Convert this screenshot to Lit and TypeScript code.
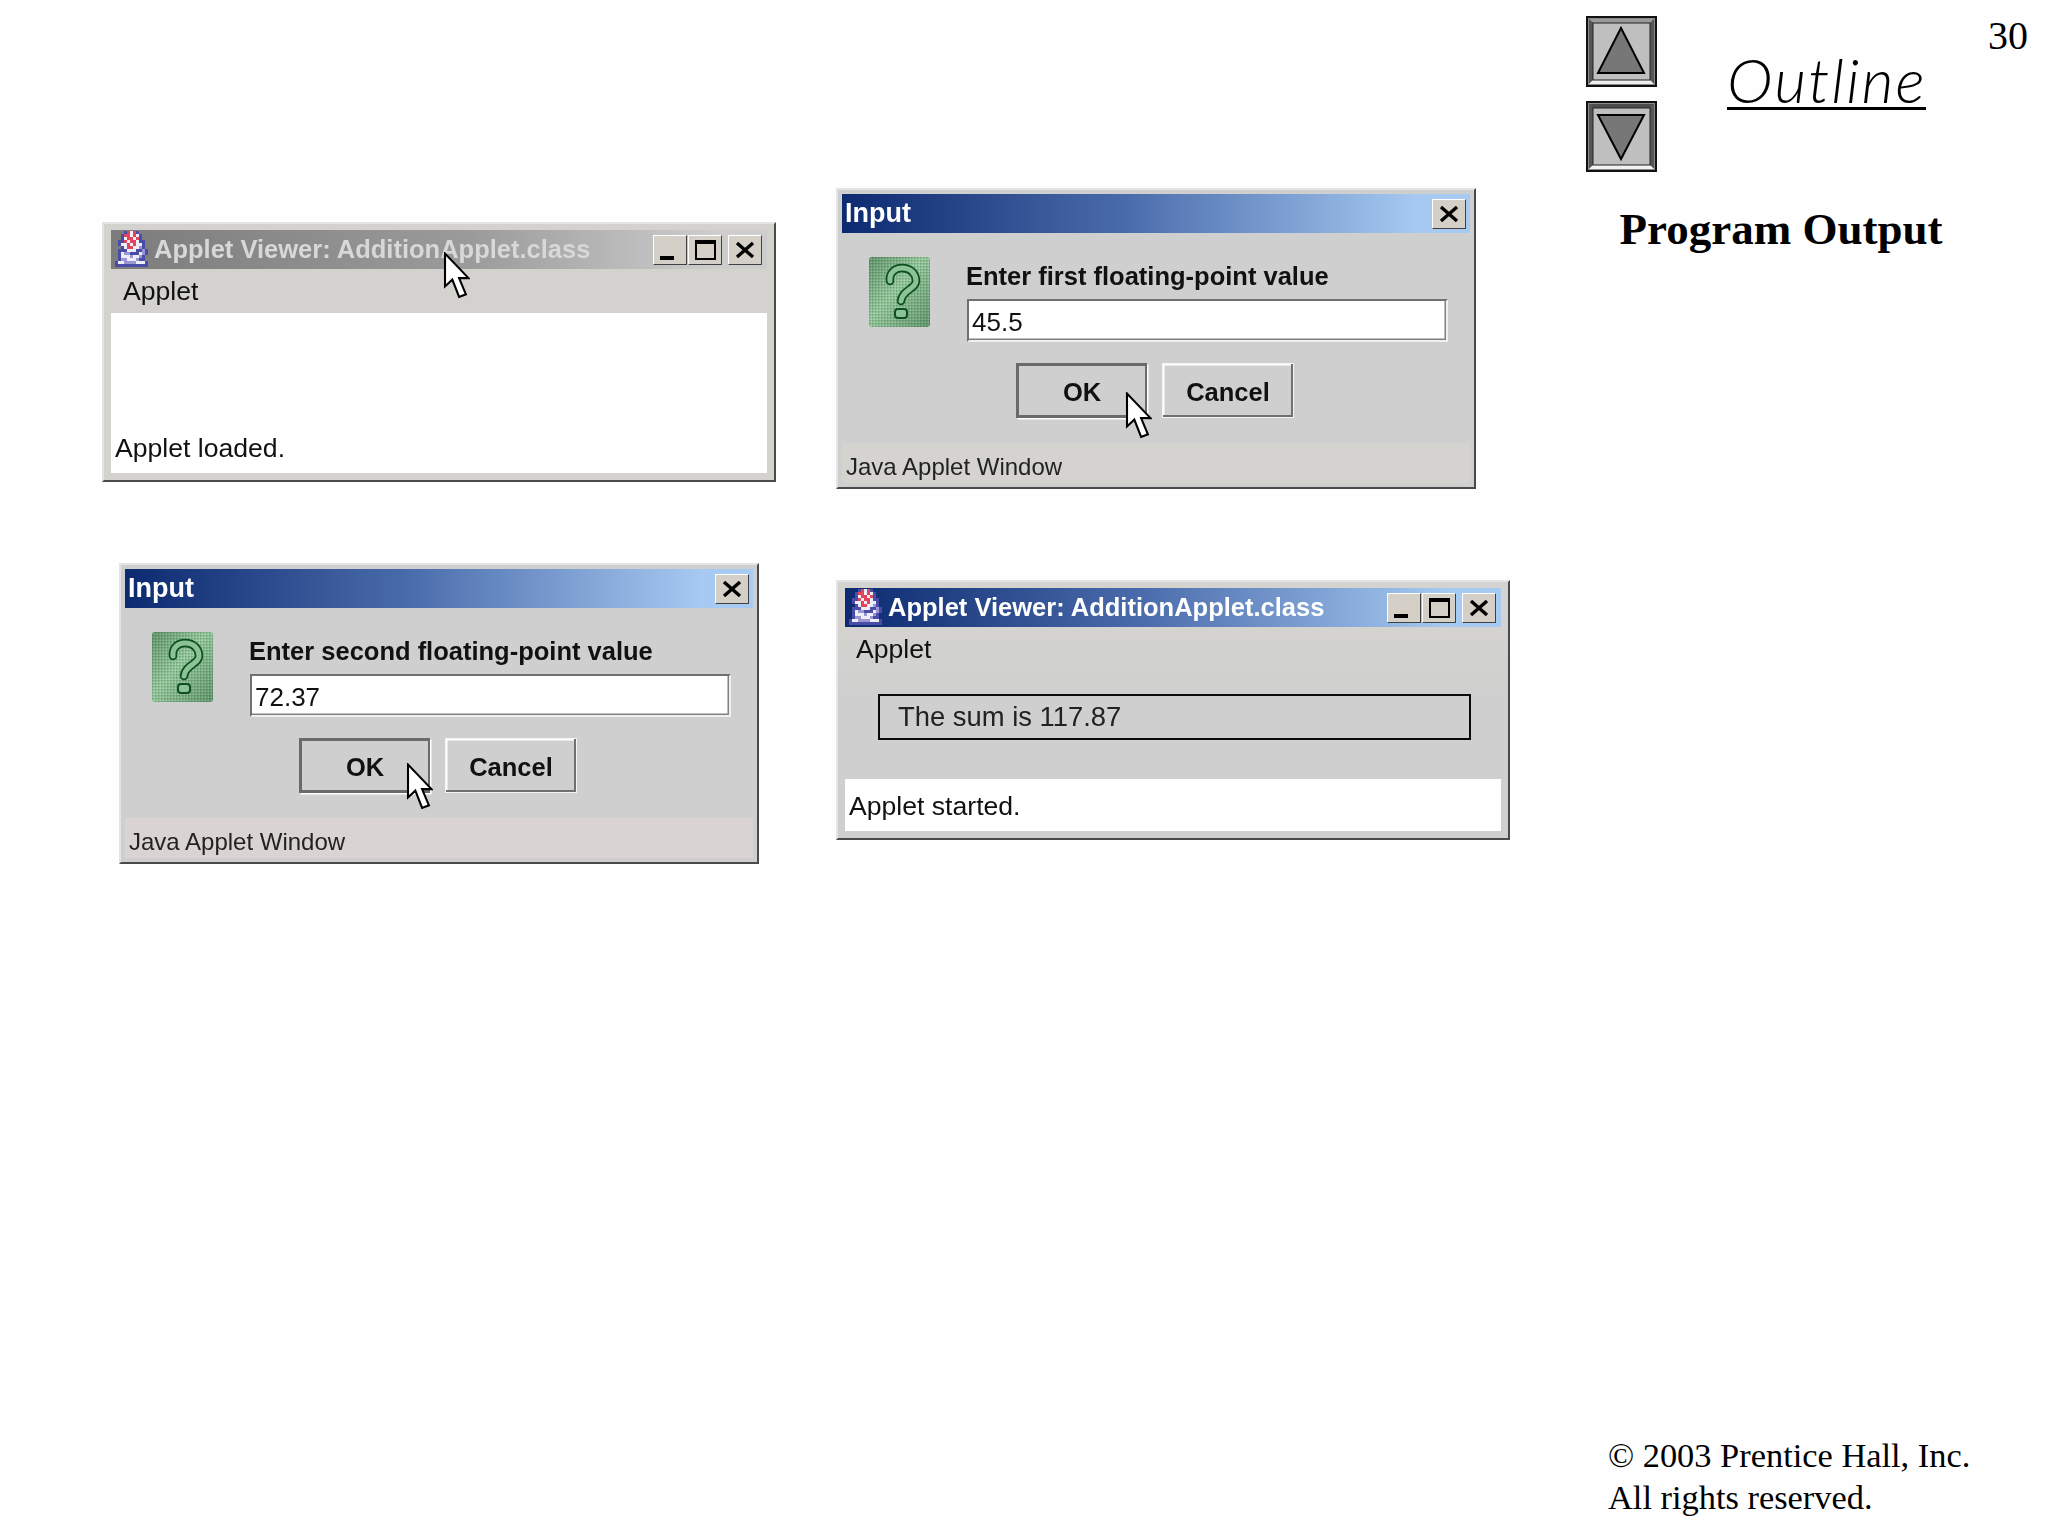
import { LitElement, html, css, svg } from "lit";
import { customElement } from "lit/decorators.js";

const ART = [
  "...brwrb...",
  "..brrwrwb..",
  "..bwrrwrb..",
  ".bbrwrrwbb.",
  ".bwwrwrwwb.",
  "..bwrrwwpb.",
  ".bbbwwwbbpb",
  ".bwppbbbwpb",
  ".bwwwpwwpb.",
  ".bppwwwpbb.",
  "bwwppppwwwb",
  "bbbbbbbbbbb",
];
const ART_COL: Record<string, string> = { b: "#4a4da8", w: "#eeeef8", r: "#e2445a", p: "#9a96d4" };

const coffee = () => html`<svg class="appicon" viewBox="0 0 33 36" width="33" height="36">
  ${ART.flatMap((row, y) =>
    [...row].map((c, x) => (c === "." ? null : svg`<rect x=${x * 3} y=${y * 3} width="3" height="3" fill=${ART_COL[c]}></rect>`))
  )}
</svg>`;

const question = (id: string) => html`<svg class="qicon" viewBox="0 0 61 70" width="61" height="70">
  <defs>
    <linearGradient id="g${id}" x1="0" y1="0" x2="1" y2="1">
      <stop offset="0" stop-color="#5a8e63"></stop>
      <stop offset=".45" stop-color="#93c79a"></stop>
      <stop offset="1" stop-color="#5a8e63"></stop>
    </linearGradient>
    <pattern id="d${id}" width="3" height="3" patternUnits="userSpaceOnUse">
      <rect width="1.5" height="1.5" fill="#3f7049" opacity=".4"></rect>
      <rect x="1.5" y="1.5" width="1.5" height="1.5" fill="#dff0e0" opacity=".3"></rect>
    </pattern>
  </defs>
  <rect width="61" height="70" rx="3" fill="url(#g${id})"></rect>
  <rect width="61" height="70" rx="3" fill="url(#d${id})"></rect>
  <path d="M21 24C20 15 27 11 33 11C42 11 47 17 47 24C47 32 33 33 32 44" fill="none" stroke="#0d4f22" stroke-width="8.5" stroke-linecap="round"></path>
  <path d="M21 24C20 15 27 11 33 11C42 11 47 17 47 24C47 32 33 33 32 44" fill="none" stroke="#8cc294" stroke-width="5" stroke-linecap="round"></path>
  <rect x="26" y="52" width="12" height="9" rx="3" fill="#8cc294" stroke="#0d4f22" stroke-width="2"></rect>
</svg>`;

const cursor = (cls: string) => html`<svg class="cursor ${cls}" viewBox="0 0 25 45" width="27" height="47">
  <path d="M1.5 1.5V33L8.5 26.5L15 43L21.5 40.5L15 25H24Z" fill="#fff" stroke="#000" stroke-width="2" stroke-linejoin="miter"></path>
</svg>`;

const capMin = () => html`<div class="cap"><span class="gmin"></span></div>`;
const capMax = () => html`<div class="cap"><span class="gmax"></span></div>`;
const capClose = () => html`<div class="cap"><svg viewBox="0 0 20 18" width="20" height="18"><path d="M2 2L18 16M18 2L2 16" stroke="#000" stroke-width="3.4"></path></svg></div>`;

const nav = (down: boolean) => html`<svg viewBox="0 0 71 71" width="71" height="71">
  <rect x="1" y="1" width="69" height="69" fill="#8a8a8a" stroke="#111" stroke-width="2"></rect>
  <path d="M3 3H68L63 8H8Z" fill=${down ? "#4d4d4d" : "#9a9a9a"}></path>
  <path d="M3 3V68L8 63V8Z" fill="#555"></path>
  <path d="M68 3V68L63 63V8Z" fill="#555"></path>
  <path d="M3 68H68L63 63H8Z" fill=${down ? "#f2f2f2" : "#efefef"}></path>
  <rect x="7" y="7" width="57" height="57" fill="#bfbfbf" stroke="#222" stroke-width="1"></rect>
  <path d=${down ? "M12 14H58L35 58Z" : "M35 12L58 57H12Z"} fill="#777" stroke="#000" stroke-width="2"></path>
</svg>`;

@customElement("app-root")
export class AppRoot extends LitElement {
  static styles = css`
    :host { display: block; }
    .page {
      display: flex; width: 2048px; height: 1536px; background: #fefefe; overflow: hidden;
      color: #000; font-family: "Liberation Serif", "Times New Roman", serif;
    }
    .desk { position: relative; flex: none; width: 1560px; height: 1536px; }
    .win {
      position: absolute; box-sizing: border-box; display: flex; flex-direction: column;
      padding: 6px 7px 7px 7px; background: #d4d2ce;
      border-style: solid; border-width: 2px; border-color: #e4e4e4 #4a4a4a #4a4a4a #e4e4e4;
      font-family: "Liberation Sans", Arial, sans-serif; color: #111; filter: blur(.45px);
    }
    .w1 { left: 102px; top: 222px; width: 674px; height: 260px; }
    .w2 { left: 836px; top: 188px; width: 640px; height: 301px; padding: 4px; background: #cfcfcf; }
    .w3 { left: 119px; top: 563px; width: 640px; height: 301px; padding: 4px; background: #cfcfcf; }
    .w4 { left: 836px; top: 580px; width: 674px; height: 260px; background: linear-gradient(#d4d3cf, #d4d3cf 15%, #cfcfcf 45%); }
    .title {
      flex: none; height: 39px; display: flex; align-items: center; gap: 6px; padding: 0 5px 0 4px;
      background: linear-gradient(90deg, #0c2a70, #4a6bab 45%, #a6caf2 92%); color: #fff;
      font-weight: 700; font-size: 25.5px;
    }
    .w1 .title { background: linear-gradient(90deg, #7c7c7c, #9b9b9b 55%, #cdcdcd 92%); color: #d8d8d8; }
    .w2 .title, .w3 .title { font-size: 27px; padding: 0 4px 0 3px; }
    .ttext { flex: 1; white-space: nowrap; }
    .caps { display: flex; align-items: center; }
    .cap {
      box-sizing: border-box; width: 34px; height: 30px; display: flex; align-items: center; justify-content: center;
      background: #d4d0c8; border-style: solid; border-width: 1.5px; border-color: #fff #404040 #404040 #fff;
    }
    .cap + .cap { margin-left: 1px; }
    .cap:last-child { margin-left: 6px; }
    .caps .cap:first-child { margin-left: 0; }
    .gmin { width: 14px; height: 4px; background: #000; align-self: flex-end; margin: 0 6px 4px 0; }
    .gmax { width: 21px; height: 20px; box-sizing: border-box; border: 2px solid #000; border-top-width: 4px; }
    .menu { flex: none; height: 44px; display: flex; align-items: center; padding-left: 12px; font-size: 26.6px; }
    .w4 .menu { height: 45px; padding-left: 11px; }
    .white { flex: 1; background: #fff; display: flex; align-items: flex-end; padding: 0 0 6px 4px; font-size: 26.6px; line-height: 38px; }
    .w4 .main { flex: 1; padding: 22px 30px 0 33px; }
    .outbox {
      box-sizing: border-box; height: 46px; border: 2.5px solid #0a0a0a; display: flex; align-items: center;
      padding-left: 18px; font-size: 27.4px; color: #222;
    }
    .w4 .white { flex: none; height: 50px; padding: 2px 0 0 4px; align-items: center; }
    .body { flex: 1; padding: 24px 0 0 27px; display: flex; flex-direction: column; }
    .row { display: flex; gap: 36px; }
    .qicon { flex: none; display: block; }
    .col { display: flex; flex-direction: column; }
    .label { font-weight: 700; font-size: 25.5px; line-height: 30px; height: 38px; margin-top: 4px; white-space: nowrap; }
    .field {
      box-sizing: border-box; width: 481px; height: 43px; margin-left: 1px; background: #fff;
      border-style: solid; border-width: 2px; border-color: #707070 #f0f0f0 #f0f0f0 #707070;
      box-shadow: inset -1.5px -1.5px 0 #808080; display: flex; align-items: center;
      padding: 4px 0 0 3px; font-size: 26px;
    }
    .btns { display: flex; gap: 15px; margin: 21px 0 0 147px; }
    .btn {
      box-sizing: border-box; height: 55px; padding-top: 3px; display: flex; align-items: center; justify-content: center;
      font-weight: 700; font-size: 25.5px; border: 1.5px solid #f4f4f4; box-shadow: inset -2px -2px 0 #707070, inset 1.5px 1.5px 0 #fff;
    }
    .ok { width: 131px; border: 3.5px solid #6a6a6a; border-right-width: 2px; box-shadow: 1.5px 1.5px 0 #fff; }
    .cancel { width: 132px; }
    .status {
      margin-top: auto; height: 40px; flex: none; display: flex; align-items: center; padding: 8px 0 0 4px; box-sizing: border-box;
      background: #d4d3d0; font-size: 24px; color: #222;
    }
    .w3 .status { background: #d9d3d1; }
    .cursor { position: absolute; z-index: 2; filter: blur(.4px); }
    .c1 { left: 443px; top: 252px; }
    .c2 { left: 1125px; top: 392px; }
    .c3 { left: 406px; top: 763px; }
    .appicon { flex: none; display: block; margin-top: -1px; }

    .side { flex: none; width: 488px; height: 1536px; display: flex; flex-direction: column; }
    .head { flex: none; display: flex; height: 188px; padding: 16px 0 0 26px; box-sizing: border-box; }
    .nav { display: flex; flex-direction: column; gap: 14px; flex: none; }
    .nav svg { display: block; }
    .outline-wrap { flex: none; margin: 27px 0 0 70px; height: 68px; }
    .outline {
      display: inline-block; font-family: Lato, "Open Sans", sans-serif; font-style: italic; font-weight: 300;
      font-size: 62px; letter-spacing: 2px; line-height: 72px; height: 64px; border-bottom: 3px solid #000;
      white-space: nowrap; width: 199px; text-align: center;
    }
    .num { font-size: 40px; line-height: 46px; margin: -3px 0 0 auto; padding-right: 20px; }
    .sub { flex: none; text-align: center; font-weight: 700; font-size: 45px; line-height: 52px; width: 442px; margin-top: 15px; }
    .copy { margin-top: auto; padding: 0 0 18px 48px; font-size: 34.4px; line-height: 42px; }
  `;

  private dialog(cls: string, id: string, label: string, value: string) {
    return html`<div class="win ${cls}">
      <div class="title">
        <span class="ttext">Input</span>
        <div class="caps">${capClose()}</div>
      </div>
      <div class="body">
        <div class="row">
          ${question(id)}
          <div class="col">
            <div class="label">${label}</div>
            <div class="field">${value}</div>
          </div>
        </div>
        <div class="btns">
          <div class="btn ok">OK</div>
          <div class="btn cancel">Cancel</div>
        </div>
      </div>
      <div class="status">Java Applet Window</div>
    </div>`;
  }

  private viewerTitle() {
    return html`<div class="title">
      ${coffee()}
      <span class="ttext">Applet Viewer: AdditionApplet.class</span>
      <div class="caps">${capMin()}${capMax()}${capClose()}</div>
    </div>`;
  }

  render() {
    return html`<div class="page">
      <div class="desk">
        <div class="win w1">
          ${this.viewerTitle()}
          <div class="menu">Applet</div>
          <div class="white">Applet loaded.</div>
        </div>
        ${this.dialog("w2", "a", "Enter first floating-point value", "45.5")}
        ${this.dialog("w3", "b", "Enter second floating-point value", "72.37")}
        <div class="win w4">
          ${this.viewerTitle()}
          <div class="menu">Applet</div>
          <div class="main"><div class="outbox">The sum is 117.87</div></div>
          <div class="white">Applet started.</div>
        </div>
        ${cursor("c1")}${cursor("c2")}${cursor("c3")}
      </div>
      <div class="side">
        <div class="head">
          <div class="nav">${nav(false)}${nav(true)}</div>
          <div class="outline-wrap"><span class="outline">Outline</span></div>
          <div class="num">30</div>
        </div>
        <div class="sub">Program Output</div>
        <div class="copy">© 2003 Prentice Hall, Inc.<br />All rights reserved.</div>
      </div>
    </div>`;
  }
}
